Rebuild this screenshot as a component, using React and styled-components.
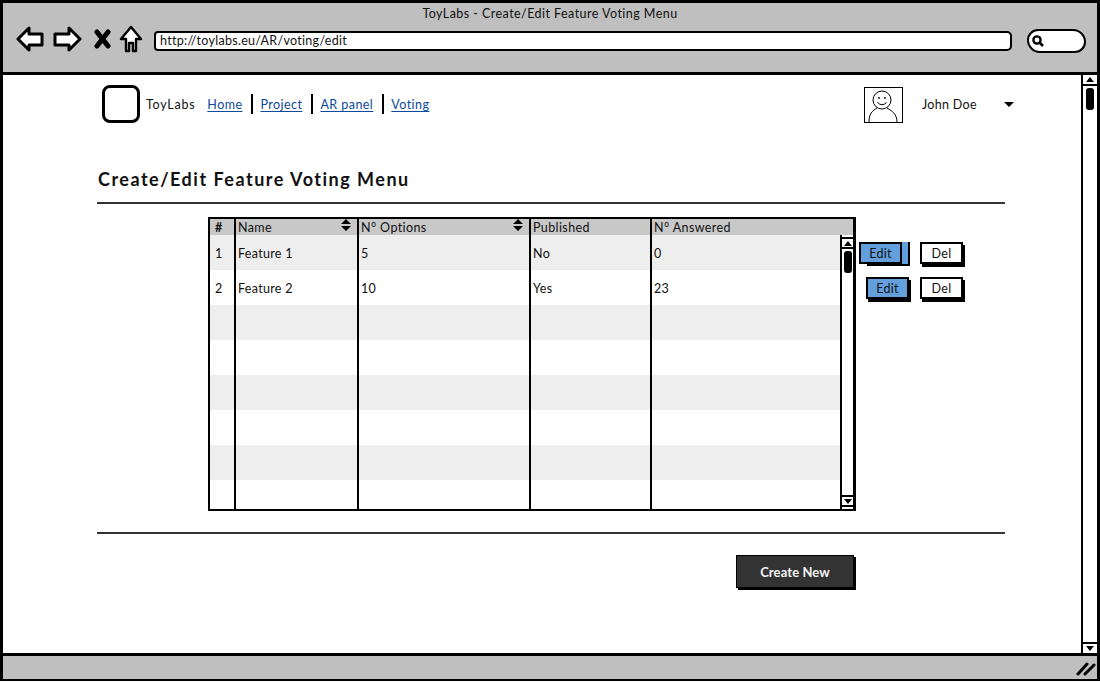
import React from "react"
import styled, { createGlobalStyle } from "styled-components"

const GlobalStyle = createGlobalStyle`
  html, body {
    margin: 0;
    padding: 0;
    overflow: hidden;
    background: #fff;
  }
  body {
    font-family: "Lato", "Open Sans", sans-serif;
    font-size: 13px;
    color: #111;
  }
  * {
    box-sizing: border-box;
  }
`

const Window = styled.div`
  display: flex;
  flex-direction: column;
  width: 1100px;
  height: 681px;
  border: 3px solid #000;
  border-bottom-width: 2px;
`
const Toolbar = styled.header`
  flex: none;
  height: 72px;
  padding: 3px 13px 0;
  background: #bfbfbf;
  border-bottom: 3px solid #000;
`
const WindowTitle = styled.div`
  height: 16px;
  line-height: 16px;
  font-size: 12.5px;
  letter-spacing: 0.45px;
  text-align: center;
  color: #111;
`
const NavRow = styled.div`
  display: flex;
  align-items: center;
  height: 30px;
  margin-top: 2px;
`
const NavIcon = styled.svg`
  flex: none;
  display: block;
  margin-right: ${(p) => p.$gap}px;
`
const AddressBar = styled.div`
  flex: none;
  width: 858px;
  height: 20px;
  margin: 4px 0 0 0;
  padding-left: 4px;
  line-height: 16px;
  font-size: 12.5px;
  letter-spacing: 0.3px;
  background: #fff;
  border: 2px solid #000;
  border-radius: 4px 5px 5px 4px;
`
const SearchBox = styled.div`
  flex: none;
  display: flex;
  align-items: center;
  width: 59px;
  height: 24px;
  margin: 4px 0 0 15px;
  padding-left: 2px;
  background: #fff;
  border: 2px solid #000;
  border-radius: 12px 14px 12px 14px;
`
const Main = styled.div`
  flex: 1;
  display: flex;
  min-height: 0;
`
const Page = styled.main`
  flex: 1;
  min-width: 0;
  padding: 10px 0 0 94px;
`
const TopBar = styled.div`
  display: flex;
  align-items: center;
  width: 930px;
  height: 38px;
  padding-left: 5px;
`
const Logo = styled.div`
  flex: none;
  width: 38px;
  height: 38px;
  border: 3px solid #000;
  border-radius: 8px;
  background: #fff;
`
const Brand = styled.span`
  margin: 0 12px 0 6px;
  font-size: 12.5px;
  letter-spacing: 0.75px;
`
const Links = styled.nav`
  display: flex;
  align-items: center;
  flex: 1;
`
const NavLink = styled.a`
  display: block;
  height: 20px;
  line-height: 21px;
  padding: 0 9px 0 0;
  font-size: 12.5px;
  letter-spacing: 0.45px;
  color: #0b4a9c;
  text-decoration: underline;
  text-underline-offset: 2px;
  & + & {
    padding-left: 7px;
    border-left: 2px solid #000;
  }
`
const Avatar = styled.svg`
  flex: none;
  display: block;
  margin-top: 1px;
`
const UserName = styled.span`
  width: 82px;
  margin-left: 19px;
  font-size: 12.5px;
  letter-spacing: 0.3px;
`
const Caret = styled.span`
  flex: none;
  width: 0;
  height: 0;
  margin-right: 13px;
  border-left: 5px solid transparent;
  border-right: 5px solid transparent;
  border-top: 5px solid #000;
`
const Heading = styled.h1`
  margin: 44px 0 0 1px;
  height: 24px;
  line-height: 24px;
  font-size: 18px;
  font-weight: 700;
  letter-spacing: 1.5px;
  color: #111;
`
const Rule = styled.hr`
  width: 908px;
  height: 2px;
  margin: ${(p) => p.$top}px 0 0 0;
  background: #333;
  border: 0;
`
const TableArea = styled.div`
  display: flex;
  align-items: flex-start;
  margin: 13px 0 0 111px;
`
const Table = styled.div`
  flex: none;
  display: flex;
  flex-direction: column;
  width: 648px;
  height: 294px;
  border: 2px solid #000;
  border-right-width: 3px;
`
const HeaderRow = styled.div`
  flex: none;
  display: grid;
  grid-template-columns: 26px 123px 172px 121px 1fr;
  height: 16px;
  background: #c8c8c8;
`
const HeaderCell = styled.div`
  position: relative;
  padding-left: ${(p) => (p.$center ? 5 : 2)}px;
  line-height: 18px;
  font-size: 12.5px;
  letter-spacing: 0.4px;
  font-weight: ${(p) => (p.$center ? 700 : 400)};
  border-right: ${(p) => (p.$last ? 0 : "2px solid #000")};
`
const SortArrows = styled.svg`
  position: absolute;
  top: 0;
  right: 6px;
`
const TableBody = styled.div`
  flex: 1;
  display: flex;
  min-height: 0;
`
const Rows = styled.div`
  flex: 1;
  min-width: 0;
`
const Row = styled.div`
  display: grid;
  grid-template-columns: 26px 123px 172px 121px 1fr;
  height: ${(p) => (p.$short ? 29 : 35)}px;
  background: ${(p) => (p.$odd ? "#eeeeee" : "#fff")};
`
const Cell = styled.div`
  padding: 1px 0 0 ${(p) => (p.$first ? 5 : 2)}px;
  line-height: 35px;
  font-size: 12.5px;
  letter-spacing: 0.3px;
  border-right: ${(p) => (p.$last ? 0 : "2px solid #000")};
`
const Scroll = styled.div`
  flex: none;
  display: flex;
  flex-direction: column;
  width: ${(p) => p.$width}px;
  padding: ${(p) => (p.$inset ? "2px 0" : 0)};
  background: #fff;
  border-left: 2px solid #000;
`
const ScrollButton = styled.div`
  flex: none;
  display: flex;
  align-items: center;
  justify-content: center;
  height: ${(p) => (p.$boxed ? 12 : 11)}px;
  margin-top: ${(p) => (p.$down ? "auto" : 0)};
  border-top: ${(p) => (p.$down || p.$boxed ? "2px solid #000" : 0)};
  border-bottom: ${(p) => (!p.$down || p.$boxed ? "2px solid #000" : 0)};
`
const ScrollArrow = styled.span`
  width: 0;
  height: 0;
  border-left: 4px solid transparent;
  border-right: 4px solid transparent;
  border-top: ${(p) => (p.$down ? "5px solid #000" : 0)};
  border-bottom: ${(p) => (p.$down ? 0 : "5px solid #000")};
`
const Thumb = styled.div`
  flex: none;
  width: 8px;
  height: 22px;
  margin: 2px auto 0;
  background: #000;
  border-radius: 3px;
`
const Actions = styled.div`
  flex: none;
  display: flex;
  flex-direction: column;
  gap: 13px;
  width: 105px;
  margin: 25px 0 0 3px;
`
const ActionRow = styled.div`
  display: flex;
  justify-content: flex-end;
  gap: 11px;
  padding-right: 1px;
  height: 22px;
`
const ActionButton = styled.button`
  flex: none;
  width: 43px;
  height: 22px;
  margin-right: ${(p) => (p.$stacked ? 7 : 0)}px;
  padding: 0;
  font-family: inherit;
  font-size: 12.5px;
  letter-spacing: 0.3px;
  color: #111;
  background: ${(p) => (p.$primary ? "#629fdc" : "#fff")};
  border: 2px solid #000;
  box-shadow: ${(p) =>
    p.$stacked
      ? "6px 0 0 #629fdc, 8px 0 0 #000, 8px 2px 0 #000"
      : "2px 3px 0 #000"};
`
const Footer = styled.div`
  display: flex;
  justify-content: flex-end;
  width: 757px;
  margin-top: 21px;
`
const CreateButton = styled.button`
  width: 118px;
  height: 33px;
  padding: 0;
  font-family: inherit;
  font-size: 13px;
  font-weight: 700;
  letter-spacing: 0.1px;
  color: #f4f4f4;
  background: #333;
  border: 1px solid #000;
  box-shadow: 2px 2px 0 #000;
`
const StatusBar = styled.footer`
  flex: none;
  display: flex;
  align-items: center;
  justify-content: flex-end;
  height: 26px;
  padding-right: 1px;
  background: #bfbfbf;
  border-top: 3px solid #000;
`

const BackIcon = () => (
  <NavIcon width="28" height="26" viewBox="0 0 28 26" $gap={9}>
    <path d="M2 13 L13 2 V8 H26 L26 19 H13 V24 Z" fill="#fff" stroke="#000" strokeWidth="3" strokeLinejoin="round" />
  </NavIcon>
)
const ForwardIcon = () => (
  <NavIcon width="29" height="26" viewBox="0 0 29 26" $gap={12}>
    <path d="M27 13 L16 2 V8 H2 L2 19 H16 V24 Z" fill="#fff" stroke="#000" strokeWidth="3" strokeLinejoin="round" />
  </NavIcon>
)
const CloseIcon = () => (
  <NavIcon width="17" height="20" viewBox="0 0 17 20" $gap={8}>
    <path d="M3 3 L14 17 M14 3 L3 17" fill="none" stroke="#000" strokeWidth="5" strokeLinecap="round" />
  </NavIcon>
)
const HomeIcon = () => (
  <NavIcon width="24" height="28" viewBox="0 0 24 28" $gap={11}>
    <path d="M12 2 L22 14 H17 V26 H14 V18 H10 V26 H7 V14 H2 Z" fill="#fff" stroke="#000" strokeWidth="2.4" strokeLinejoin="round" />
  </NavIcon>
)
const SearchIcon = () => (
  <svg width="14" height="14" viewBox="0 0 14 14">
    <circle cx="6" cy="6" r="3.6" fill="none" stroke="#000" strokeWidth="2.4" />
    <path d="M8.5 8.5 L12 12" stroke="#000" strokeWidth="2.6" />
  </svg>
)
const UserAvatar = () => (
  <Avatar width="39" height="36" viewBox="0 0 39 36">
    <rect x="0.5" y="0.5" width="38" height="35" fill="#fff" stroke="#000" />
    <circle cx="18" cy="13" r="9" fill="none" stroke="#000" />
    <circle cx="15" cy="11" r="0.9" fill="#000" />
    <circle cx="21" cy="11" r="0.9" fill="#000" />
    <path d="M13.5 15.5 Q18 20 22.5 15.5" fill="none" stroke="#000" />
    <path d="M5 35 C5 27 8 24 13 21 M33 35 C33 27 28 24 23 21" fill="none" stroke="#000" />
  </Avatar>
)
const SortIcon = () => (
  <SortArrows width="10" height="12" viewBox="0 0 10 12">
    <path d="M5 0 L10 5 H0 Z M0 7 H10 L5 12 Z" fill="#000" />
  </SortArrows>
)
const Grip = () => (
  <svg width="20" height="16" viewBox="0 0 20 16">
    <path d="M2 14 L11 4 M9 14 L18 5" stroke="#000" strokeWidth="3" strokeLinecap="round" />
  </svg>
)

const columns = [
  { label: "#", center: true },
  { label: "Name", sort: true },
  { label: "N° Options", sort: true },
  { label: "Published" },
  { label: "N° Answered", last: true },
]

const features = [
  ["1", "Feature 1", "5", "No", "0"],
  ["2", "Feature 2", "10", "Yes", "23"],
]
const emptyRows = Array.from({ length: 6 }, () => ["", "", "", "", ""])

const App = () => {
  const rows = [...features, ...emptyRows]

  return (
    <>
      <GlobalStyle />
      <Window>
        <Toolbar>
          <WindowTitle>ToyLabs - Create/Edit Feature Voting Menu</WindowTitle>
          <NavRow>
            <BackIcon />
            <ForwardIcon />
            <CloseIcon />
            <HomeIcon />
            <AddressBar>http://toylabs.eu/AR/voting/edit</AddressBar>
            <SearchBox>
              <SearchIcon />
            </SearchBox>
          </NavRow>
        </Toolbar>
        <Main>
          <Page>
            <TopBar>
              <Logo />
              <Brand>ToyLabs</Brand>
              <Links>
                <NavLink>Home</NavLink>
                <NavLink>Project</NavLink>
                <NavLink>AR panel</NavLink>
                <NavLink>Voting</NavLink>
              </Links>
              <UserAvatar />
              <UserName>John Doe</UserName>
              <Caret />
            </TopBar>
            <Heading>Create/Edit Feature Voting Menu</Heading>
            <Rule $top={11} />
            <TableArea>
              <Table>
                <HeaderRow>
                  {columns.map((col) => (
                    <HeaderCell key={col.label} $center={col.center} $last={col.last}>
                      {col.label}
                      {col.sort && <SortIcon />}
                    </HeaderCell>
                  ))}
                </HeaderRow>
                <TableBody>
                  <Rows>
                    {rows.map((row, i) => (
                      <Row key={i} $odd={i % 2 === 0} $short={i === rows.length - 1}>
                        {row.map((value, j) => (
                          <Cell key={j} $first={j === 0} $last={j === row.length - 1}>
                            {value}
                          </Cell>
                        ))}
                      </Row>
                    ))}
                  </Rows>
                  <Scroll $width={13} $inset>
                    <ScrollButton $boxed>
                      <ScrollArrow />
                    </ScrollButton>
                    <Thumb />
                    <ScrollButton $boxed $down>
                      <ScrollArrow $down />
                    </ScrollButton>
                  </Scroll>
                </TableBody>
              </Table>
              <Actions>
                <ActionRow>
                  <ActionButton $primary $stacked>Edit</ActionButton>
                  <ActionButton>Del</ActionButton>
                </ActionRow>
                <ActionRow>
                  <ActionButton $primary>Edit</ActionButton>
                  <ActionButton>Del</ActionButton>
                </ActionRow>
              </Actions>
            </TableArea>
            <Rule $top={21} />
            <Footer>
              <CreateButton>Create New</CreateButton>
            </Footer>
          </Page>
          <Scroll $width={16}>
            <ScrollButton>
              <ScrollArrow />
            </ScrollButton>
            <Thumb />
            <ScrollButton $down>
              <ScrollArrow $down />
            </ScrollButton>
          </Scroll>
        </Main>
        <StatusBar>
          <Grip />
        </StatusBar>
      </Window>
    </>
  )
}

export default App
